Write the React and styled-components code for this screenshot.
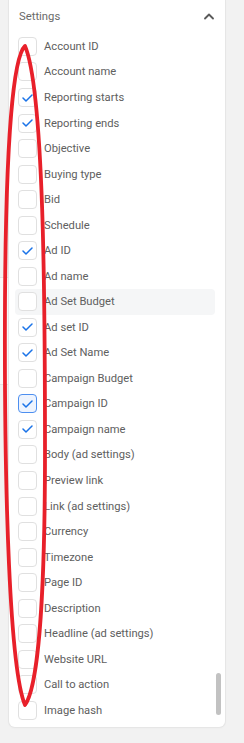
import React from "react";
import styled, { createGlobalStyle } from "styled-components";

const Global = createGlobalStyle`
  html, body { margin: 0; padding: 0; background: #f2f2f2; }
  body { font-family: Roboto, "Liberation Sans", Arial, sans-serif; }
`;

const Page = styled.div`
  position: relative;
  width: 244px;
  height: 743px;
  overflow: hidden;
  background: #f2f2f2;
`;

const Behind = styled.div`
  position: absolute;
  left: 0;
  top: 277px;
  width: 12px;
  height: 106px;
  background: #fafafa;
  border-top: 1px solid #e4e4e4;
  border-bottom: 1px solid #e4e4e4;
`;

const Panel = styled.div`
  position: relative;
  margin-left: 9px;
  width: 216px;
  background: #fff;
  border-radius: 0 0 6px 6px;
  box-shadow: 0 0 0 1px #e6e6e6, 0 1px 3px rgba(0, 0, 0, 0.04);
  padding-bottom: 4px;
`;

const Header = styled.div`
  height: 32px;
  padding: 0 11px 1.7px 10px;
  display: flex;
  align-items: center;
  justify-content: space-between;
  font-size: 11.3px;
  color: #6a6a6a;
`;

const List = styled.div`
  display: flex;
  flex-direction: column;
  padding: 0 10px 0 6px;
`;

const Row = styled.div`
  height: 25.54px;
  display: flex;
  align-items: center;
  gap: 7px;
  padding-left: 3px;
  border-radius: 4px;
  background: ${(p) => (p.$hover ? "#f5f6f7" : "transparent")};
  font-size: 11.2px;
  color: #606060;
  white-space: nowrap;
`;

const Box = styled.div`
  width: 19px;
  height: 19px;
  box-sizing: border-box;
  flex: none;
  border-radius: 4px;
  border: ${(p) => (p.$focus ? "1.5px solid #4d8ff0" : "1px solid #e0e0e0")};
  background: ${(p) => (p.$focus ? "#eef4fe" : "#fff")};
  display: flex;
  align-items: center;
  justify-content: center;
`;

const Thumb = styled.div`
  position: absolute;
  right: 4px;
  top: 673px;
  width: 5px;
  height: 42px;
  border-radius: 3px;
  background: #c2c2c2;
`;

const Overlay = styled.svg`
  position: absolute;
  left: 0;
  top: 0;
  pointer-events: none;
`;

const items = [
  ["Account ID", false],
  ["Account name", false],
  ["Reporting starts", true],
  ["Reporting ends", true],
  ["Objective", false],
  ["Buying type", false],
  ["Bid", false],
  ["Schedule", false],
  ["Ad ID", true],
  ["Ad name", false],
  ["Ad Set Budget", false, "hover"],
  ["Ad set ID", true],
  ["Ad Set Name", true],
  ["Campaign Budget", false],
  ["Campaign ID", true, "focus"],
  ["Campaign name", true],
  ["Body (ad settings)", false],
  ["Preview link", false],
  ["Link (ad settings)", false],
  ["Currency", false],
  ["Timezone", false],
  ["Page ID", false],
  ["Description", false],
  ["Headline (ad settings)", false],
  ["Website URL", false],
  ["Call to action", false],
  ["Image hash", false],
];

const Check = () => (
  <svg width="11" height="8" viewBox="0 0 11 8" fill="none">
    <path d="M1 4 L4 7 L10 1" stroke="#1a73e8" strokeWidth="1.5" strokeLinecap="round" strokeLinejoin="round" />
  </svg>
);

const Chevron = () => (
  <svg width="10" height="7" viewBox="0 0 10 7" fill="none">
    <path d="M1 5.5 L5 1.5 L9 5.5" stroke="#5a5a5a" strokeWidth="1.8" strokeLinecap="round" strokeLinejoin="round" />
  </svg>
);

export default function App() {
  return (
    <>
      <Global />
      <Page>
        <Behind />
        <Panel>
          <Header>
            <span>Settings</span>
            <Chevron />
          </Header>
          <List>
            {items.map(([label, checked, state]) => (
              <Row key={label} $hover={state === "hover"}>
                <Box $focus={state === "focus"}>{checked && <Check />}</Box>
                <span>{label}</span>
              </Row>
            ))}
          </List>
          <Thumb />
        </Panel>
        <Overlay width="244" height="743" viewBox="0 0 244 743">
          <path
            d="M25 46 C14 56 6 130 5 300 C4 500 10 670 25 705 C36 690 45 620 45 450 C45 300 44 90 25 46 Z"
            fill="none"
            stroke="#e8202a"
            strokeWidth="3.8"
            strokeLinejoin="round"
          />
        </Overlay>
      </Page>
    </>
  );
}
